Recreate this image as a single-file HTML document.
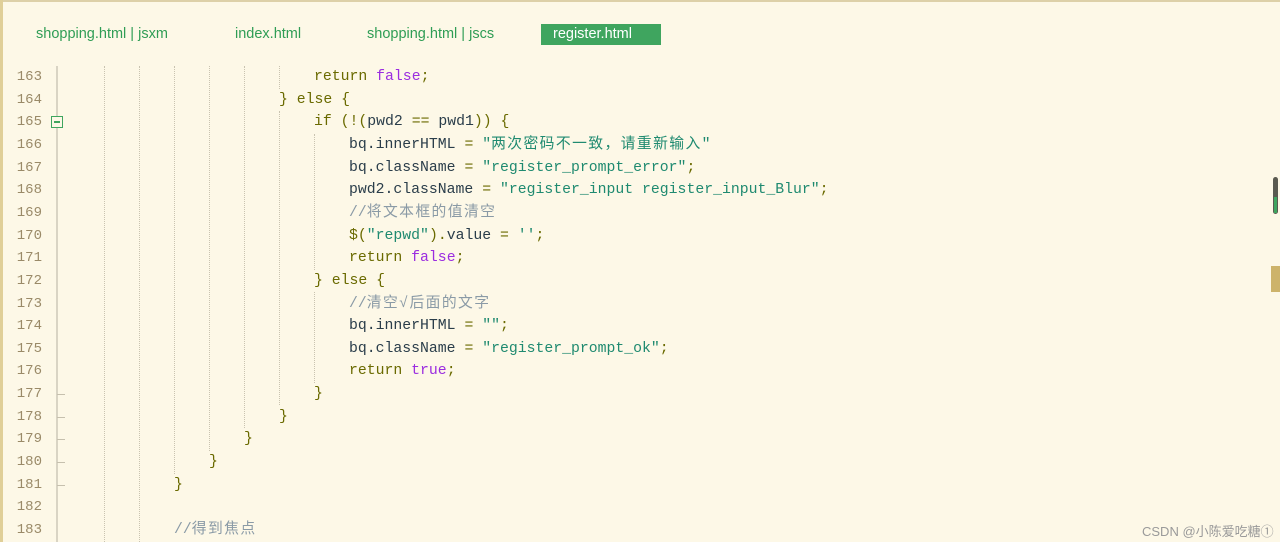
<!DOCTYPE html>
<html><head><meta charset="utf-8"><style>
body{margin:0;width:1280px;height:542px;overflow:hidden;background:#fdf8e7;position:relative;font-family:"Liberation Sans",sans-serif}
.top{position:absolute;left:0;top:0;width:1280px;height:2px;background:#ddd0a8}
.left{position:absolute;left:0;top:0;width:3px;height:542px;background:#e0cf98}
.tab{position:absolute;top:24px;height:21px;line-height:21px;font-size:14.5px;color:#2f9d55;white-space:nowrap}
.act{background:#3fa55f;color:#fff;left:541px;width:120px;padding-left:12px;box-sizing:border-box}
.ln{position:absolute;left:0;width:42px;text-align:right;font:14px "Liberation Mono",monospace;color:#9a8a68;height:22.65px;line-height:22.65px}
.code{position:absolute;white-space:pre;font:14.8px "Liberation Mono","Noto Sans CJK SC",monospace;color:#6a6a00;height:22.65px;line-height:22.65px}
.v{color:#2a3d4a}.s{color:#1f8a70}.k{color:#9b2de0}.c{color:#8a9aa6}
.cj{letter-spacing:1.4px}
.g{position:absolute;width:0;border-left:1px dotted #c9c3b0}
.gut{position:absolute;left:56px;top:66px;width:2px;height:476px;background:#d9d4c4}
.tick{position:absolute;left:57px;width:8px;height:1px;background:#c6c0ae}
.fold{position:absolute;left:51px;top:116px;width:10px;height:10px;border:1px solid #3fa55f;background:#fdf8e7}
.fold:after{content:"";position:absolute;left:2px;top:4px;width:6px;height:2px;background:#3fa55f}
</style></head><body>
<div class="top"></div><div class="left"></div>
<div class="tab" style="left:36px">shopping.html | jsxm</div>
<div class="tab" style="left:235px">index.html</div>
<div class="tab" style="left:367px">shopping.html | jscs</div>
<div class="tab act">register.html</div>

<div class="gut"></div>
<div class="fold"></div>

<div class="g" style="left:104px;top:66px;height:476px"></div>
<div class="g" style="left:139px;top:66px;height:476px"></div>
<div class="g" style="left:174px;top:66px;height:408px"></div>
<div class="g" style="left:209px;top:66px;height:385px"></div>
<div class="g" style="left:244px;top:66px;height:362px"></div>
<div class="g" style="left:279px;top:66px;height:23px"></div>
<div class="g" style="left:279px;top:111px;height:294px"></div>
<div class="g" style="left:314px;top:134px;height:136px"></div>
<div class="g" style="left:314px;top:292px;height:91px"></div>

<div class="ln" style="top:66px">163</div><div class="code" style="left:314px;top:66px">return <span class="k">false</span>;</div>
<div class="ln" style="top:88.65px">164</div><div class="code" style="left:279px;top:88.65px">} else {</div>
<div class="ln" style="top:111.3px">165</div><div class="code" style="left:314px;top:111.3px">if (!(<span class="v">pwd2</span> == <span class="v">pwd1</span>)) {</div>
<div class="ln" style="top:133.95px">166</div><div class="code" style="left:349px;top:133.95px"><span class="v">bq.innerHTML</span> = <span class="s">"<span class="cj">两次密码不一致，请重新输入</span>"</span></div>
<div class="ln" style="top:156.6px">167</div><div class="code" style="left:349px;top:156.6px"><span class="v">bq.className</span> = <span class="s">"register_prompt_error"</span>;</div>
<div class="ln" style="top:179.25px">168</div><div class="code" style="left:349px;top:179.25px"><span class="v">pwd2.className</span> = <span class="s">"register_input register_input_Blur"</span>;</div>
<div class="ln" style="top:201.9px">169</div><div class="code" style="left:349px;top:201.9px"><span class="c">//<span class="cj">将文本框的值清空</span></span></div>
<div class="ln" style="top:224.55px">170</div><div class="code" style="left:349px;top:224.55px">$(<span class="s">"repwd"</span>).<span class="v">value</span> = <span class="s">''</span>;</div>
<div class="ln" style="top:247.2px">171</div><div class="code" style="left:349px;top:247.2px">return <span class="k">false</span>;</div>
<div class="ln" style="top:269.85px">172</div><div class="code" style="left:314px;top:269.85px">} else {</div>
<div class="ln" style="top:292.5px">173</div><div class="code" style="left:349px;top:292.5px"><span class="c">//<span class="cj">清空√后面的文字</span></span></div>
<div class="ln" style="top:315.15px">174</div><div class="code" style="left:349px;top:315.15px"><span class="v">bq.innerHTML</span> = <span class="s">""</span>;</div>
<div class="ln" style="top:337.8px">175</div><div class="code" style="left:349px;top:337.8px"><span class="v">bq.className</span> = <span class="s">"register_prompt_ok"</span>;</div>
<div class="ln" style="top:360.45px">176</div><div class="code" style="left:349px;top:360.45px">return <span class="k">true</span>;</div>
<div class="ln" style="top:383.1px">177</div><div class="code" style="left:314px;top:383.1px">}</div>
<div class="ln" style="top:405.75px">178</div><div class="code" style="left:279px;top:405.75px">}</div>
<div class="ln" style="top:428.4px">179</div><div class="code" style="left:244px;top:428.4px">}</div>
<div class="ln" style="top:451.05px">180</div><div class="code" style="left:209px;top:451.05px">}</div>
<div class="ln" style="top:473.7px">181</div><div class="code" style="left:174px;top:473.7px">}</div>
<div class="ln" style="top:496.35px">182</div>
<div class="ln" style="top:519px">183</div><div class="code" style="left:174px;top:519px"><span class="c">//<span class="cj">得到焦点</span></span></div>

<div class="tick" style="top:394px"></div><div class="tick" style="top:417px"></div><div class="tick" style="top:439px"></div><div class="tick" style="top:462px"></div><div class="tick" style="top:485px"></div>

<div style="position:absolute;left:1273px;top:177px;width:5px;height:37px;background:#5a5a50;border-radius:3px"></div>
<div style="position:absolute;left:1274px;top:197px;width:3px;height:16px;background:#3fa55f"></div>
<div style="position:absolute;left:1271px;top:266px;width:9px;height:26px;background:#cdb36a"></div>
<div style="position:absolute;left:1142px;top:521px;font-size:13px;white-space:nowrap;color:#9a9a9a;font-family:'Liberation Sans','Noto Sans CJK SC',sans-serif">CSDN @小陈爱吃糖①</div>
</body></html>
